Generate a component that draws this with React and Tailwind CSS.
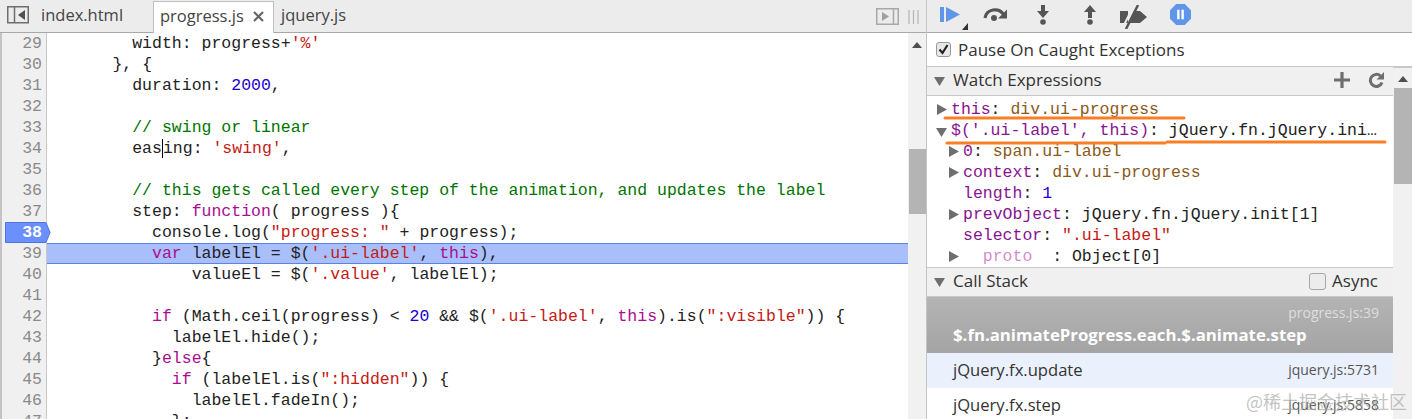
import React from "react";

const ui = "font-['Open_Sans','Noto_Sans',sans-serif]";

const K = ({ children }) => <span className="text-[#aa0d91]">{children}</span>;
const S = ({ children }) => <span className="text-[#c41a16]">{children}</span>;
const N = ({ children }) => <span className="text-[#1c00cf]">{children}</span>;
const C = ({ children }) => <span className="text-[#007400]">{children}</span>;

const lines = [
  [29, 8, <>width: progress+<S>'%'</S></>],
  [30, 6, <>{"}, {"}</>],
  [31, 8, <>duration: <N>2000</N>,</>],
  [32, 0, ""],
  [33, 8, <C>// swing or linear</C>],
  [34, 8, <>eas<span className="border-l border-black" />ing: <S>'swing'</S>,</>],
  [35, 0, ""],
  [36, 8, <C>// this gets called every step of the animation, and updates the label</C>],
  [37, 8, <>step: <K>function</K>( progress ){"{"}</>],
  [38, 10, <>console.log(<S>"progress: "</S> + progress);</>],
  [39, 10, <><K>var</K> labelEl = $(<S>'.ui-label'</S>, <K>this</K>),</>],
  [40, 14, <>valueEl = $(<S>'.value'</S>, labelEl);</>],
  [41, 0, ""],
  [42, 10, <><K>if</K> (Math.ceil(progress) &lt; <N>20</N> &amp;&amp; $(<S>'.ui-label'</S>, <K>this</K>).is(<S>":visible"</S>)) {"{"}</>],
  [43, 12, <>labelEl.hide();</>],
  [44, 10, <>{"}"}<K>else</K>{"{"}</>],
  [45, 12, <><K>if</K> (labelEl.is(<S>":hidden"</S>)) {"{"}</>],
  [46, 14, <>labelEl.fadeIn();</>],
  [47, 12, <>{"};"}</>],
];

const Tri = ({ down, className = "" }) => (
  <svg width="12" height="12" viewBox="0 0 12 12" className={`shrink-0 ${className}`}>
    <path d={down ? "M0 2h11L5.500 11z" : "M1 0v11l10-5.500z"} fill="#6e6e6e" />
  </svg>
);

const Code = ({ n, indent, children }) => {
  const paused = n === 39;
  return (
    <div className="flex h-[21px] leading-[21px]">
      <div
        className={`relative w-[45px] shrink-0 border-r pr-[4px] text-right ${
          n === 38 ? "border-[#f0f0f0] font-bold text-white" : "border-[#c8c8c8] bg-[#f0f0f0] text-[#8a8a8a]"
        }`}
      >
        {n === 38 && (
          <svg width="50" height="21" viewBox="0 0 50 21" className="absolute left-0 top-0">
            <path d="M0 0h44v21H0z" fill="#f0f0f0" />
            <path d="M3.500.5H44l4 10-4 10H3.500z" fill="#6b8ffb" stroke="#4d74e0" />
          </svg>
        )}
        <span className="relative">{n}</span>
      </div>
      <div
        className={`grow whitespace-pre pl-[6px] ${
          paused ? "border-y border-[#5b82e6] bg-[#a9bffb] leading-[19px]" : ""
        }`}
      >
        {" ".repeat(indent)}
        {children}
      </div>
    </div>
  );
};

const WatchRow = ({ arrow, name, faded, children }) => (
  <div className="flex h-[21px] items-center pl-[21px] leading-[21px] whitespace-pre">
    <span className="w-[15px] shrink-0">{arrow && <Tri />}</span>
    <span className={faded ? "text-[#aa0d91]/50" : "text-[#881391]"}>{name}</span>
    {children}
  </div>
);

const Scrollbar = ({ className = "", top, thumb }) => (
  <div className={`flex shrink-0 flex-col items-center bg-[#f1f1f1] ${className}`}>
    <svg width="10" height="6" viewBox="0 0 10 6" className={top}>
      <path d="M0 6h10L5 0z" fill="#505050" />
    </svg>
    {thumb}
  </div>
);

export default function App() {
  return (
    <div className="relative flex h-[419px] w-[1412px] overflow-hidden bg-white text-[#222]">
      {/* editor */}
      <div className="flex w-[926px] shrink-0 flex-col">
        <div className={`${ui} flex h-[33px] shrink-0 items-end border-b border-[#a8a8a8] bg-[#ececec] text-[16.500px] text-[#444]`}>
          <svg width="22" height="18" viewBox="0 0 22 18" className="mb-[8px] ml-[7px]">
            <rect x=".75" y=".75" width="20.500" height="16" fill="none" stroke="#6e6e6e" strokeWidth="1.500" />
            <path d="M7.500 1v16" stroke="#6e6e6e" strokeWidth="1.500" />
            <path d="M18 4v10l-7-5z" fill="#505050" />
          </svg>
          <span className="mb-[4px] ml-[12px] w-[112px]">index.html</span>
          <div className="-mb-px flex h-[32px] w-[121px] items-center justify-between border border-b-0 border-[#c0c0c0] bg-white pb-[3px] pl-[6px] pr-[9px]">
            <span>progress.js</span>
            <svg width="11" height="11" viewBox="0 0 11 11">
              <path d="M1 1l9 9M10 1l-9 9" stroke="#666" strokeWidth="2.200" />
            </svg>
          </div>
          <span className="mb-[4px] ml-[7px]">jquery.js</span>
          <div className="mb-[7px] ml-auto mr-[7px] flex items-center gap-[9px]">
            <svg width="23" height="17" viewBox="0 0 23 17">
              <rect x=".75" y=".75" width="21.500" height="15.500" fill="none" stroke="#a8a8a8" strokeWidth="1.500" />
              <path d="M17.500 1v15" stroke="#a8a8a8" strokeWidth="1.500" />
              <path d="M6 4v9l7-4.500z" fill="#a0a0a0" />
            </svg>
            <svg width="11" height="14" viewBox="0 0 11 14">
              <path d="M1 0v14M5.500 0v14M10 0v14" stroke="#b8b8b8" strokeWidth="1.300" />
            </svg>
          </div>
        </div>
        <div className="flex min-h-0 grow font-['Liberation_Mono',monospace] text-[16.500px] text-[#222]">
          <div className="min-w-0 grow overflow-hidden border-l-2 border-[#c4c4c4]">
            {lines.map(([n, indent, text]) => (
              <Code key={n} n={n} indent={indent}>
                {text}
              </Code>
            ))}
          </div>
          <Scrollbar
            className="w-[18px]"
            top="mt-[9px]"
            thumb={<div className="mt-[101px] h-[65px] w-[17px] bg-[#b4b4b4]" />}
          />
        </div>
      </div>

      {/* sidebar */}
      <div className={`${ui} flex min-w-0 grow flex-col border-l border-[#c4c4c4] text-[17px] text-[#333]`}>
        <div className="flex h-[33px] shrink-0 items-start border-b border-[#a8a8a8] bg-[#ececec] pl-[13px] pt-[5px]">
          <svg width="32" height="26" viewBox="0 0 32 26">
            <path d="M0 2h4v15H0z" fill="#5f96ea" />
            <path d="M6 2l14 7.500L6 17z" fill="#5f96ea" />
            <path d="M28 18v7h-6z" fill="#333" />
          </svg>
          <svg width="26" height="18" viewBox="0 0 26 18" className="ml-[10px]">
            <path d="M3 13a10 9.500 0 0 1 18.500-3.500" fill="none" stroke="#555" strokeWidth="3.200" />
            <path d="M25 4.500v9h-9z" fill="#555" />
            <circle cx="12" cy="13" r="3" fill="#555" />
          </svg>
          <svg width="16" height="20" viewBox="0 0 16 20" className="ml-[27px]">
            <path d="M6 0h4v6h4l-6 7-6-7h4z" fill="#555" />
            <circle cx="8" cy="17" r="2.800" fill="#555" />
          </svg>
          <svg width="16" height="20" viewBox="0 0 16 20" className="ml-[31px]">
            <path d="M6 13h4V7h4L8 0 2 7h4z" fill="#555" />
            <circle cx="8" cy="17" r="2.800" fill="#555" />
          </svg>
          <svg width="28" height="24" viewBox="0 0 28 24" className="ml-[22px]">
            <path d="M0 6h8v12H0zM14 6h6l7 6-7 6H8z" fill="#555" />
            <path d="M18 0L6 24" stroke="#555" strokeWidth="2.500" />
            <path d="M14 0L2 24" stroke="#ececec" strokeWidth="2" />
          </svg>
          <svg width="21" height="21" viewBox="0 0 22 22" className="ml-[22px] -mt-px">
            <path d="M6.500 0h9L22 6.500v9L15.500 22h-9L0 15.500v-9z" fill="#5f96ea" />
            <path d="M7.500 6h2.500v10H7.500zM12 6h2.500v10H12z" fill="#fff" />
          </svg>
        </div>

        <div className="flex h-[34px] shrink-0 items-center border-b border-[#c8c8c8] pl-[9px]">
          <span className="flex h-[15px] w-[15px] items-center justify-center rounded-[3px] border border-[#9a9a9a] bg-[#e8e8e8]">
            <svg width="13" height="13" viewBox="0 0 13 13">
              <path d="M2.500 6.500l3 3.500 5-8" fill="none" stroke="#222" strokeWidth="2.200" />
            </svg>
          </span>
          <span className="ml-[7px]">Pause On Caught Exceptions</span>
        </div>

        <div className="flex min-h-0 grow">
          <div className="flex min-w-0 grow flex-col">
            <div className="flex h-[29px] shrink-0 items-center border-b border-[#c8c8c8] bg-[#f0f0f0] pb-[2px] pl-[7px] pr-[8px]">
              <Tri down className="mt-[2px]" />
              <span className="ml-[7px]">Watch Expressions</span>
              <svg width="16" height="16" viewBox="0 0 15 15" className="ml-auto">
                <path d="M7.500 0v15M0 7.500h15" stroke="#6e6e6e" strokeWidth="3" />
              </svg>
              <svg width="17" height="16" viewBox="0 0 16 16" className="ml-[18px]">
                <path d="M13.500 10.500A6 6 0 1 1 12 4" fill="none" stroke="#6e6e6e" strokeWidth="3" />
                <path d="M15.500 0v7.500H8z" fill="#6e6e6e" />
              </svg>
            </div>

            <div className="relative h-[171px] shrink-0 font-['Liberation_Mono',monospace] text-[16.500px] text-[#222]">
              <div className="-ml-[12px] overflow-hidden pt-[3px]">
                <WatchRow arrow name="this">
                  : <span className="text-[#8b5a1a]">div.ui-progress</span>
                </WatchRow>
                <div className="flex h-[21px] items-center pl-[21px] whitespace-pre pt-[2px]">
                  <span className="w-[15px] shrink-0"><Tri down /></span>
                  <span className="text-[#881391]">$('.ui-label', this)</span>: jQuery.fn.jQuery.ini…
                </div>
                <div className="pl-[12px]">
                  <WatchRow arrow name="0">
                    : <span className="text-[#8b5a1a]">span.ui-label</span>
                  </WatchRow>
                  <WatchRow arrow name="context">
                    : <span className="text-[#8b5a1a]">div.ui-progress</span>
                  </WatchRow>
                  <WatchRow name="length">
                    : <N>1</N>
                  </WatchRow>
                  <WatchRow arrow name="prevObject">
                    : jQuery.fn.jQuery.init[1]
                  </WatchRow>
                  <WatchRow name="selector">
                    : <S>".ui-label"</S>
                  </WatchRow>
                  <WatchRow arrow faded name="  proto  ">
                    : Object[0]
                  </WatchRow>
                </div>
              </div>
              <svg width="460" height="60" viewBox="0 0 460 60" className="pointer-events-none absolute left-0 top-0">
                <path d="M18 22h239M20 47h218M240 46h218" fill="none" stroke="#f97f27" strokeWidth="3" strokeLinecap="round" />
              </svg>
            </div>

            <div className="flex h-[30px] shrink-0 items-center border-y border-[#c8c8c8] bg-[#f0f0f0] pb-[2px] pl-[7px] pr-[15px]">
              <Tri down className="mt-[2px]" />
              <span className="ml-[7px]">Call Stack</span>
              <span className="ml-auto h-[17px] w-[17px] rounded-[3px] border border-[#a8a8a8] bg-[#ececec]" />
              <span className="ml-[6px]">Async</span>
            </div>

            <div className="min-h-0 grow">
              <div className="flex h-[56px] flex-col justify-center bg-gradient-to-b from-[#b4b4b4] to-[#a4a4a4] pl-[26px] pr-[14px] text-white">
                <div className="text-right text-[14px] leading-[19px] text-[#dedede]">progress.js:39</div>
                <div className="text-[16.800px] font-bold leading-[25px]">$.fn.animateProgress.each.$.animate.step</div>
              </div>
              <div className="flex h-[35px] items-center justify-between bg-[#eaf1fd] pl-[26px] pr-[14px] text-[16.600px]">
                <span>jQuery.fx.update</span>
                <span className="mb-[3px] text-[14px] text-[#555]">jquery.js:5731</span>
              </div>
              <div className="flex h-[35px] items-center justify-between pl-[26px] pr-[14px] text-[16.600px]">
                <span>jQuery.fx.step</span>
                <span className="mb-[3px] text-[14px] text-[#555]">jquery.js:5858</span>
              </div>
            </div>
          </div>
          <Scrollbar
            className="w-[19px] border-t border-[#c8c8c8]"
            top="mt-[8px]"
            thumb={<div className="mt-[6px] h-[96px] w-[18px] bg-[#b4b4b4]" />}
          />
        </div>
      </div>

      <div className="pointer-events-none absolute left-[1246px] top-[388px] font-['Noto_Sans_CJK_SC',sans-serif] text-[18px] leading-[26px] text-[#a8a8a8]/70">
        @稀土掘金技术社区
      </div>
    </div>
  );
}
